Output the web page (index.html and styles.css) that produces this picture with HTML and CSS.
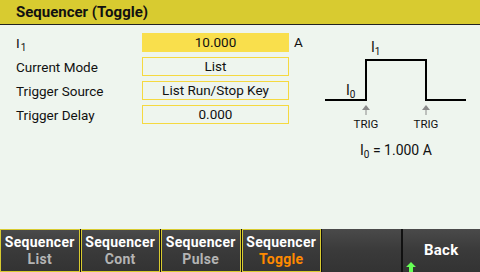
FILE: index.html
```html
<!DOCTYPE html>
<html>
<head>
<meta charset="utf-8">
<link rel="stylesheet" href="styles.css">
</head>
<body>
<div class="screen">
  <div class="header">Sequencer (Toggle)</div>
  <div class="main">
    <div class="form">
      <div class="label">I<sub>1</sub></div>
      <div class="field filled">10.000</div>
      <div class="unit">A</div>
      <div class="label">Current Mode</div>
      <div class="field">List</div>
      <div class="unit"></div>
      <div class="label">Trigger Source</div>
      <div class="field">List Run/Stop Key</div>
      <div class="unit"></div>
      <div class="label">Trigger Delay</div>
      <div class="field">0.000</div>
      <div class="unit"></div>
    </div>
    <svg class="diagram" width="160" height="132" viewBox="0 0 160 132">
      <polyline points="5,72 46,72 46,32 106,32 106,72 146,72" fill="none" stroke="#000" stroke-width="2"/>
      <text x="51" y="24" class="dtext">I<tspan class="dsub" dy="3">1</tspan></text>
      <text x="26" y="67" class="dtext">I<tspan class="dsub" dy="3">0</tspan></text>
      <g fill="#8a8a8a" stroke="#8a8a8a">
        <path d="M46 77 L42 82 L50 82 Z" stroke="none"/>
        <line x1="46" y1="81" x2="46" y2="87" stroke-width="1"/>
        <path d="M106 77 L102 82 L110 82 Z" stroke="none"/>
        <line x1="106" y1="81" x2="106" y2="87" stroke-width="1"/>
      </g>
      <text x="46" y="100" class="trig" text-anchor="middle">TRIG</text>
      <text x="106" y="100" class="trig" text-anchor="middle">TRIG</text>
      <text x="40" y="127" class="dtext">I<tspan class="dsub" dy="3">0</tspan><tspan dy="-3"> = 1.000 A</tspan></text>
    </svg>
  </div>
  <div class="softkeys">
    <div class="key framed"><span class="k1">Sequencer</span><span class="k2">List</span></div>
    <div class="key framed"><span class="k1">Sequencer</span><span class="k2">Cont</span></div>
    <div class="key framed"><span class="k1">Sequencer</span><span class="k2">Pulse</span></div>
    <div class="key framed"><span class="k1">Sequencer</span><span class="k2 active">Toggle</span></div>
    <div class="key"></div>
    <div class="key back"><span class="k1">Back</span>
      <svg class="uparrow" width="12" height="10" viewBox="0 0 12 10"><path d="M6 0 L11 5 L8 5 L8 10 L4 10 L4 5 L1 5 Z" fill="#66ff55"/></svg>
    </div>
  </div>
</div>
</body>
</html>
```
FILE: styles.css
```css
* { box-sizing: border-box; }
html, body { margin: 0; padding: 0; }
body { width: 480px; height: 272px; overflow: hidden; font-family: Roboto, "Liberation Sans", sans-serif; }
.screen { width: 480px; height: 272px; background: #eef5ee; display: flex; flex-direction: column; }
.header { height: 25px; background: #d8cb30; border-bottom: 1px solid #222; font-weight: bold; font-size: 15px; color: #111; padding-left: 16px; line-height: 24px; }
.main { flex: 1; display: flex; position: relative; }
.form { display: grid; grid-template-columns: 126px 147px 20px; grid-auto-rows: 19px; row-gap: 5px; padding: 8px 0 0 16px; align-content: start; width: 320px; }
.label { font-size: 13.5px; color: #111; line-height: 20px; }
.label sub { font-size: 10px; vertical-align: -3px; line-height: 0; margin-left: 1px; }
.field { border: 1px solid #f5d940; font-size: 13.5px; color: #111; text-align: center; line-height: 17px; }
.field.filled { background: #f9df4c; border-color: #f9df4c; }
.unit { font-size: 13.5px; color: #111; padding-left: 5px; line-height: 19px; }
.diagram { display: block; margin-top: 3px; }
.dtext { font-family: Roboto, "Liberation Sans", sans-serif; font-size: 14px; fill: #111; }
.dsub { font-size: 10px; }
.trig { font-family: Roboto, "Liberation Sans", sans-serif; font-size: 11.5px; fill: #111; }
.softkeys { height: 43px; display: flex; background: #111; }
.key { width: 80px; height: 43px; display: flex; flex-direction: column; align-items: center; justify-content: center; background: linear-gradient(#4a4a4a, #3a3a3a 50%, #333); border-left: 1px solid #111; position: relative; font-weight: bold; font-size: 14px; line-height: 17px; }
.key:first-child { border-left: none; }
.key.framed { border: 1px solid #d8cb30; margin-left: 1px; }
.key.framed:first-child { margin-left: 0; }
.k1 { color: #fff; letter-spacing: 0.3px; }
.k2 { color: #b4b4b4; letter-spacing: 0.3px; }
.k2.active { color: #ff8a00; }
.back { border-left: 2px solid #111; }
.back .k1 { font-size: 15px; }
.uparrow { position: absolute; left: 2px; bottom: 0; }
```
